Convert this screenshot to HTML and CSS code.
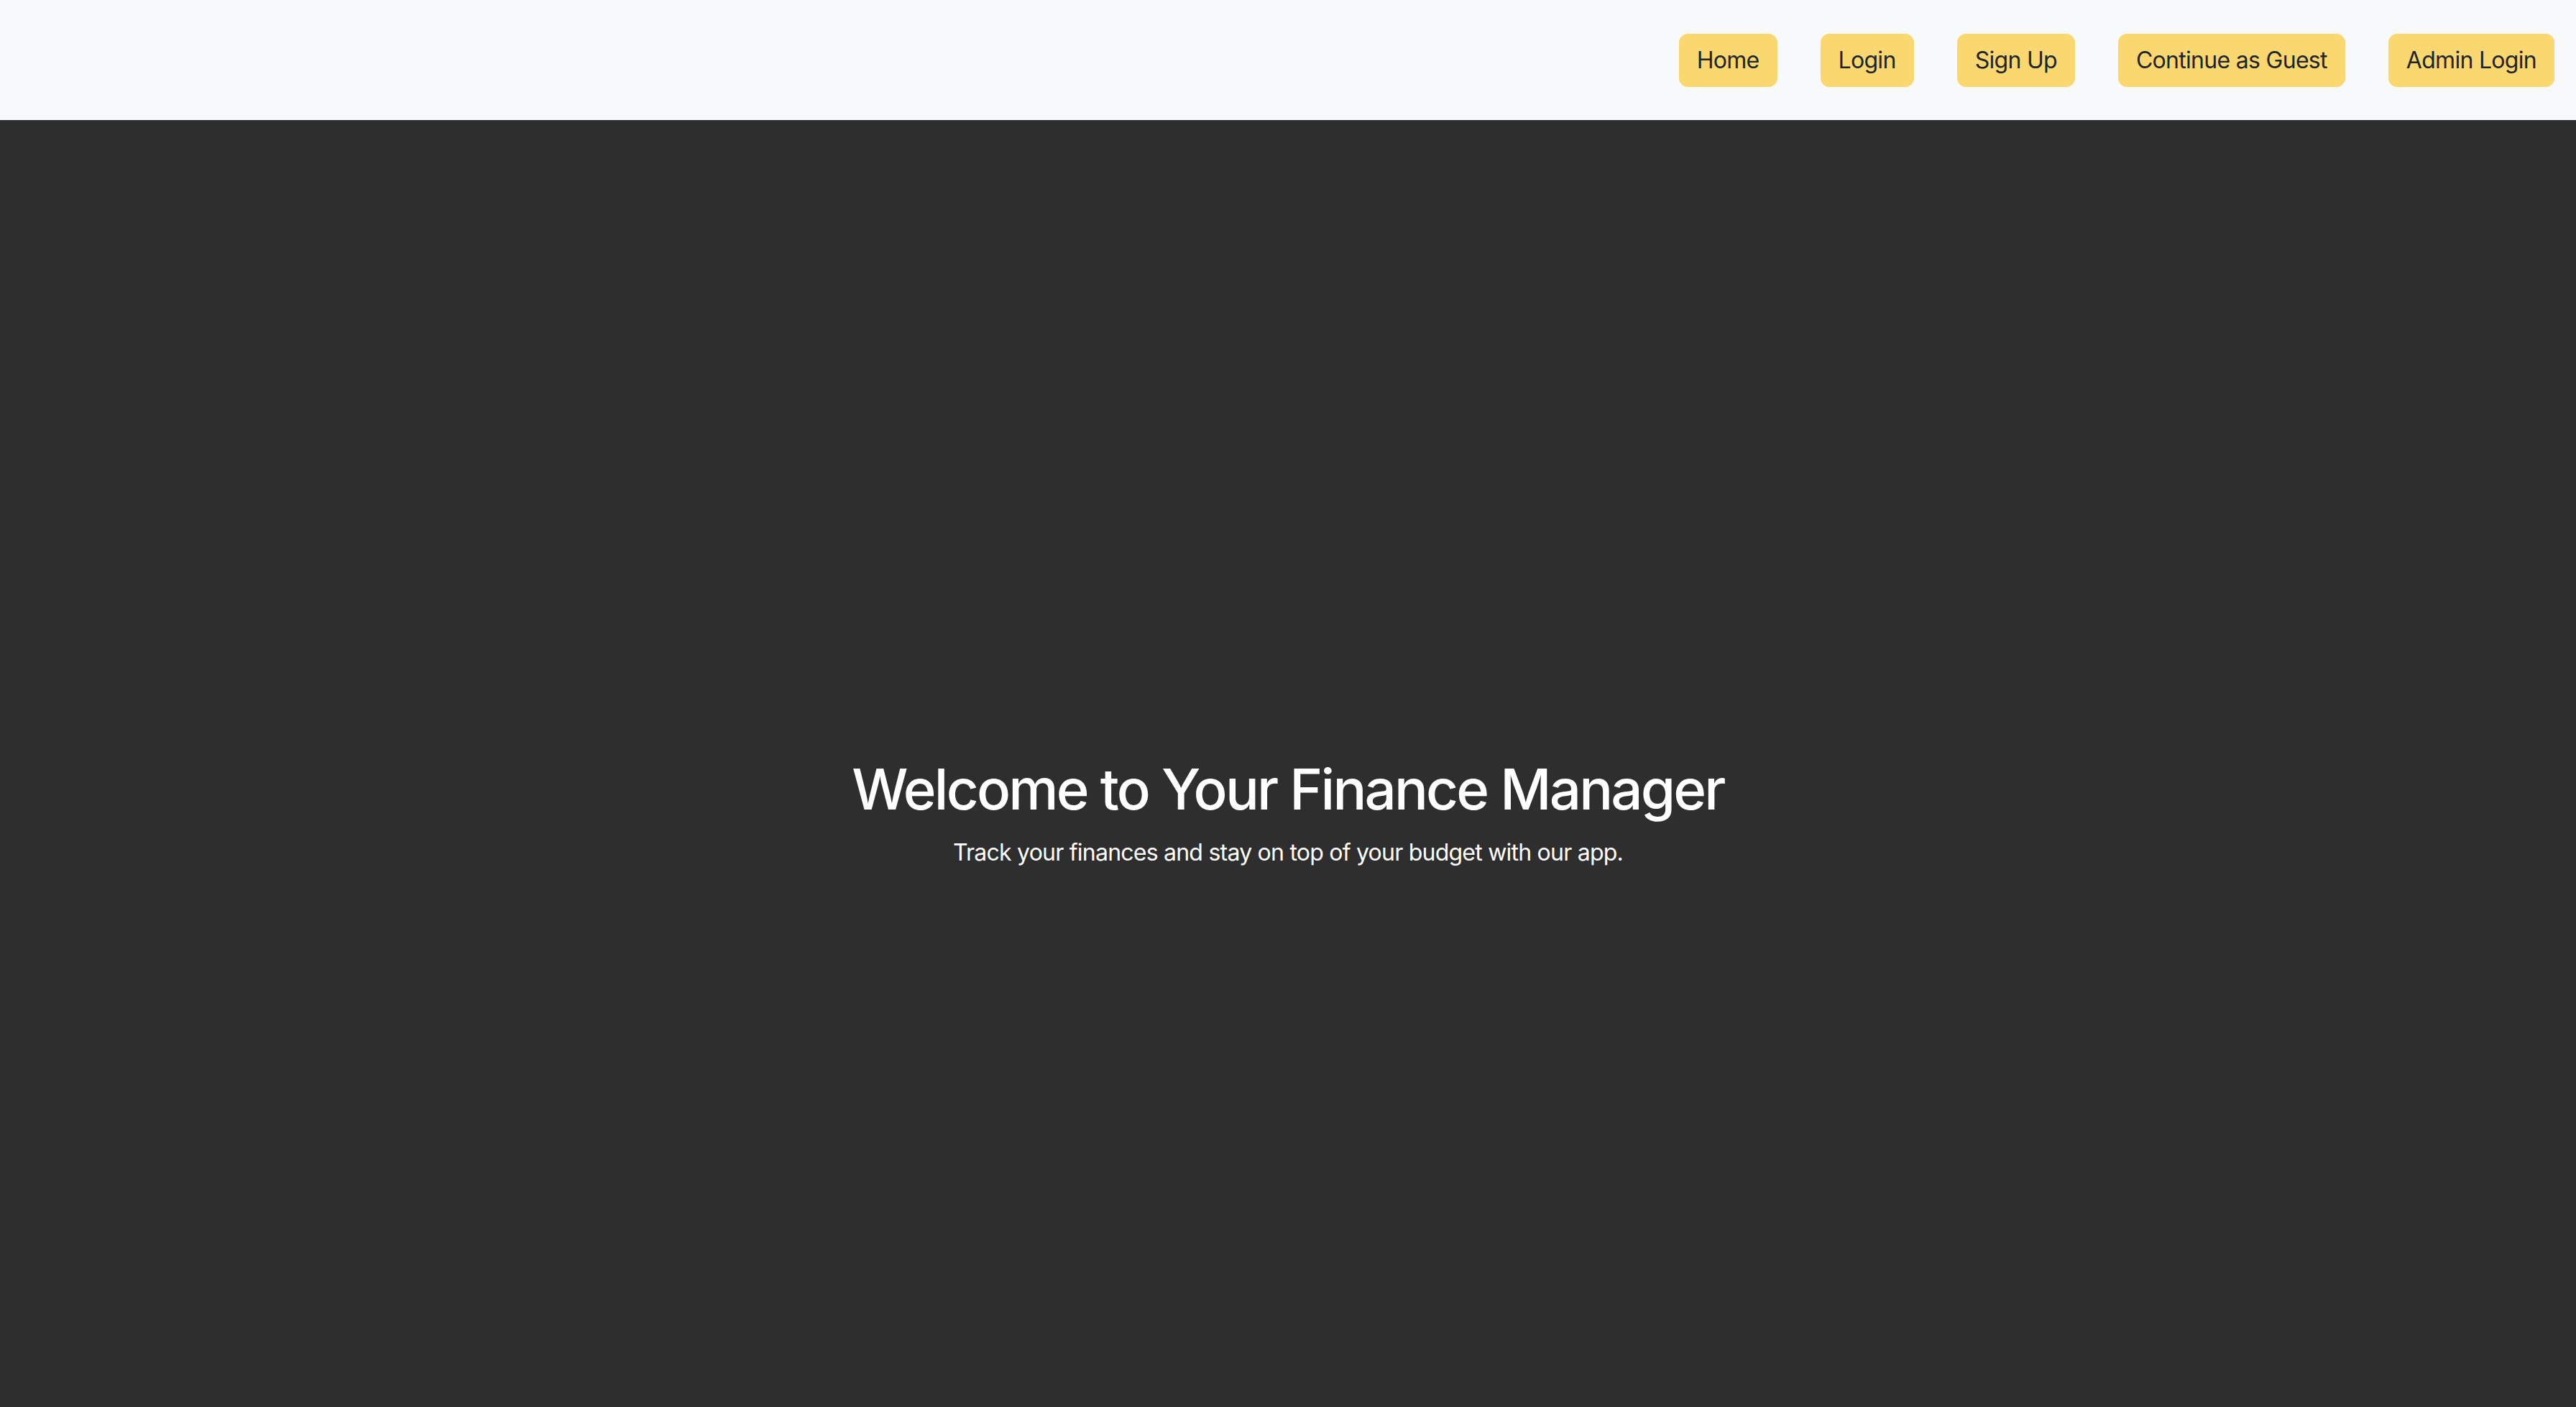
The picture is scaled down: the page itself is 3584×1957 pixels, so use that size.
FILE: index.html
```html
<!DOCTYPE html>
<html lang="en">
<head>
<meta charset="utf-8">
<title>Finance Manager</title>
<link rel="stylesheet" href="styles.css">
</head>
<body>
<nav class="navbar">
  <a class="nav-btn" href="#">Home</a>
  <a class="nav-btn" href="#">Login</a>
  <a class="nav-btn" href="#">Sign Up</a>
  <a class="nav-btn" href="#">Continue as Guest</a>
  <a class="nav-btn" href="#">Admin Login</a>
</nav>
<main class="hero">
  <h1 class="hero-title">Welcome to Your Finance Manager</h1>
  <p class="hero-sub">Track your finances and stay on top of your budget with our app.</p>
</main>
</body>
</html>
```
FILE: styles.css
```css
html {
  scrollbar-width: none;
}
body {
  margin: 0;
  font-family: Inter, "Liberation Sans", sans-serif;
  background: #2e2e2e;
  color: #212529;
}
.navbar {
  height: 167px;
  box-sizing: border-box;
  background: #f8f9fa;
  display: flex;
  justify-content: flex-end;
  align-items: center;
  gap: 60px;
  padding-right: 30px;
}
.nav-btn {
  display: inline-block;
  font-size: 32px;
  line-height: 48px;
  letter-spacing: -0.022em;
  padding: 12px 24px;
  border: 1px solid #fad76f;
  border-radius: 12px;
  background: #fad76f;
  color: #212529;
  text-decoration: none;
}
.hero {
  height: calc(100vh - 167px);
  box-sizing: border-box;
  padding-top: 167px;
  display: flex;
  flex-direction: column;
  justify-content: center;
  align-items: center;
  text-align: center;
  color: #ffffff;
}
.hero-title {
  margin: 0 0 16px;
  font-size: 78px;
  font-weight: 500;
  line-height: 96px;
  letter-spacing: -0.036em;
}
.hero-sub {
  margin: 0 0 32px;
  font-size: 32px;
  line-height: 1.5;
  letter-spacing: -0.024em;
}
```
